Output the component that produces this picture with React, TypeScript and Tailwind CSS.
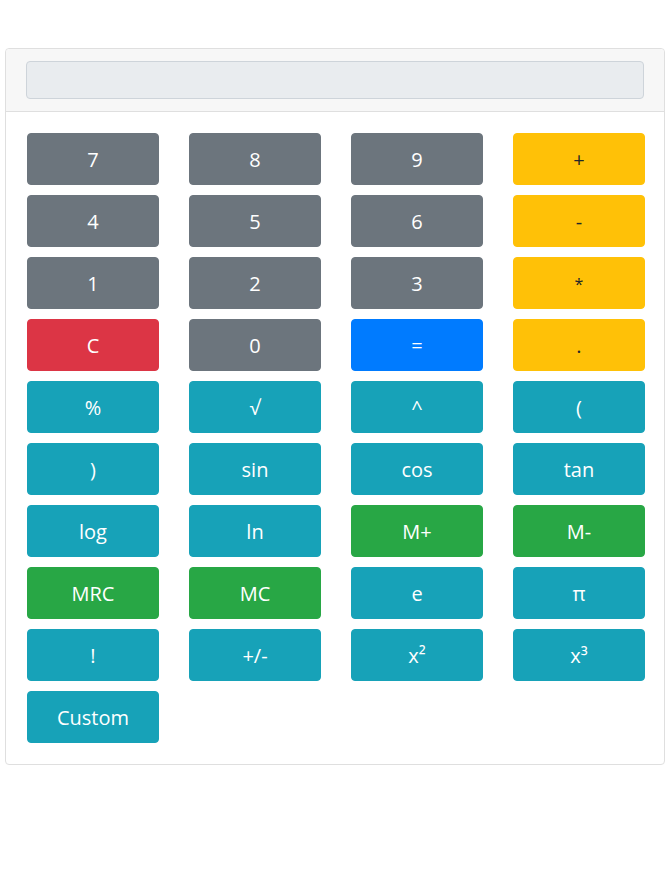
import React from 'react';

type Key = { label: string; tone: 'gray' | 'yellow' | 'red' | 'blue' | 'teal' | 'green' };

const tones: Record<Key['tone'], string> = {
    gray: 'bg-[#6c757d] text-white border-[#6c757d]',
    yellow: 'bg-[#ffc107] text-[#212529] border-[#ffc107]',
    red: 'bg-[#dc3545] text-white border-[#dc3545]',
    blue: 'bg-[#007bff] text-white border-[#007bff]',
    teal: 'bg-[#17a2b8] text-white border-[#17a2b8]',
    green: 'bg-[#28a745] text-white border-[#28a745]',
};

const keys: Key[] = [
    { label: '7', tone: 'gray' },
    { label: '8', tone: 'gray' },
    { label: '9', tone: 'gray' },
    { label: '+', tone: 'yellow' },
    { label: '4', tone: 'gray' },
    { label: '5', tone: 'gray' },
    { label: '6', tone: 'gray' },
    { label: '-', tone: 'yellow' },
    { label: '1', tone: 'gray' },
    { label: '2', tone: 'gray' },
    { label: '3', tone: 'gray' },
    { label: '*', tone: 'yellow' },
    { label: 'C', tone: 'red' },
    { label: '0', tone: 'gray' },
    { label: '=', tone: 'blue' },
    { label: '.', tone: 'yellow' },
    { label: '%', tone: 'teal' },
    { label: '√', tone: 'teal' },
    { label: '^', tone: 'teal' },
    { label: '(', tone: 'teal' },
    { label: ')', tone: 'teal' },
    { label: 'sin', tone: 'teal' },
    { label: 'cos', tone: 'teal' },
    { label: 'tan', tone: 'teal' },
    { label: 'log', tone: 'teal' },
    { label: 'ln', tone: 'teal' },
    { label: 'M+', tone: 'green' },
    { label: 'M-', tone: 'green' },
    { label: 'MRC', tone: 'green' },
    { label: 'MC', tone: 'green' },
    { label: 'e', tone: 'teal' },
    { label: 'π', tone: 'teal' },
    { label: '!', tone: 'teal' },
    { label: '+/-', tone: 'teal' },
    { label: 'x²', tone: 'teal' },
    { label: 'x³', tone: 'teal' },
    { label: 'Custom', tone: 'teal' },
];

const App: React.FC = () => (
    <div className="min-h-[890px] bg-white pt-[48px] px-[5px]" style={{ fontFamily: '"Open Sans", "Noto Sans", sans-serif' }}>
        <div className="border border-[#dfdfdf] rounded-[4px] bg-white">
            <div className="bg-[#f7f7f7] border-b border-[#dfdfdf] px-[20px] py-[12px] rounded-t-[4px]">
                <input
                    readOnly
                    className="block w-full h-[38px] bg-[#e9ecef] border border-[#ced4da] rounded-[4px] px-3 outline-none"
                />
            </div>
            <div className="px-[21px] pt-[21px] pb-[21px]">
                <div className="grid grid-cols-[repeat(4,132px)] gap-x-[30px] gap-y-[10px]">
                    {keys.map((k) => (
                        <button
                            key={k.label}
                            className={`h-[52px] rounded-[4px] border leading-none flex items-center justify-center pt-[2px] ${k.label === '*' ? 'text-[16px]' : 'text-[20px]'} ${tones[k.tone]}`}
                        >
                            {k.label}
                        </button>
                    ))}
                </div>
            </div>
        </div>
    </div>
);

export default App;
